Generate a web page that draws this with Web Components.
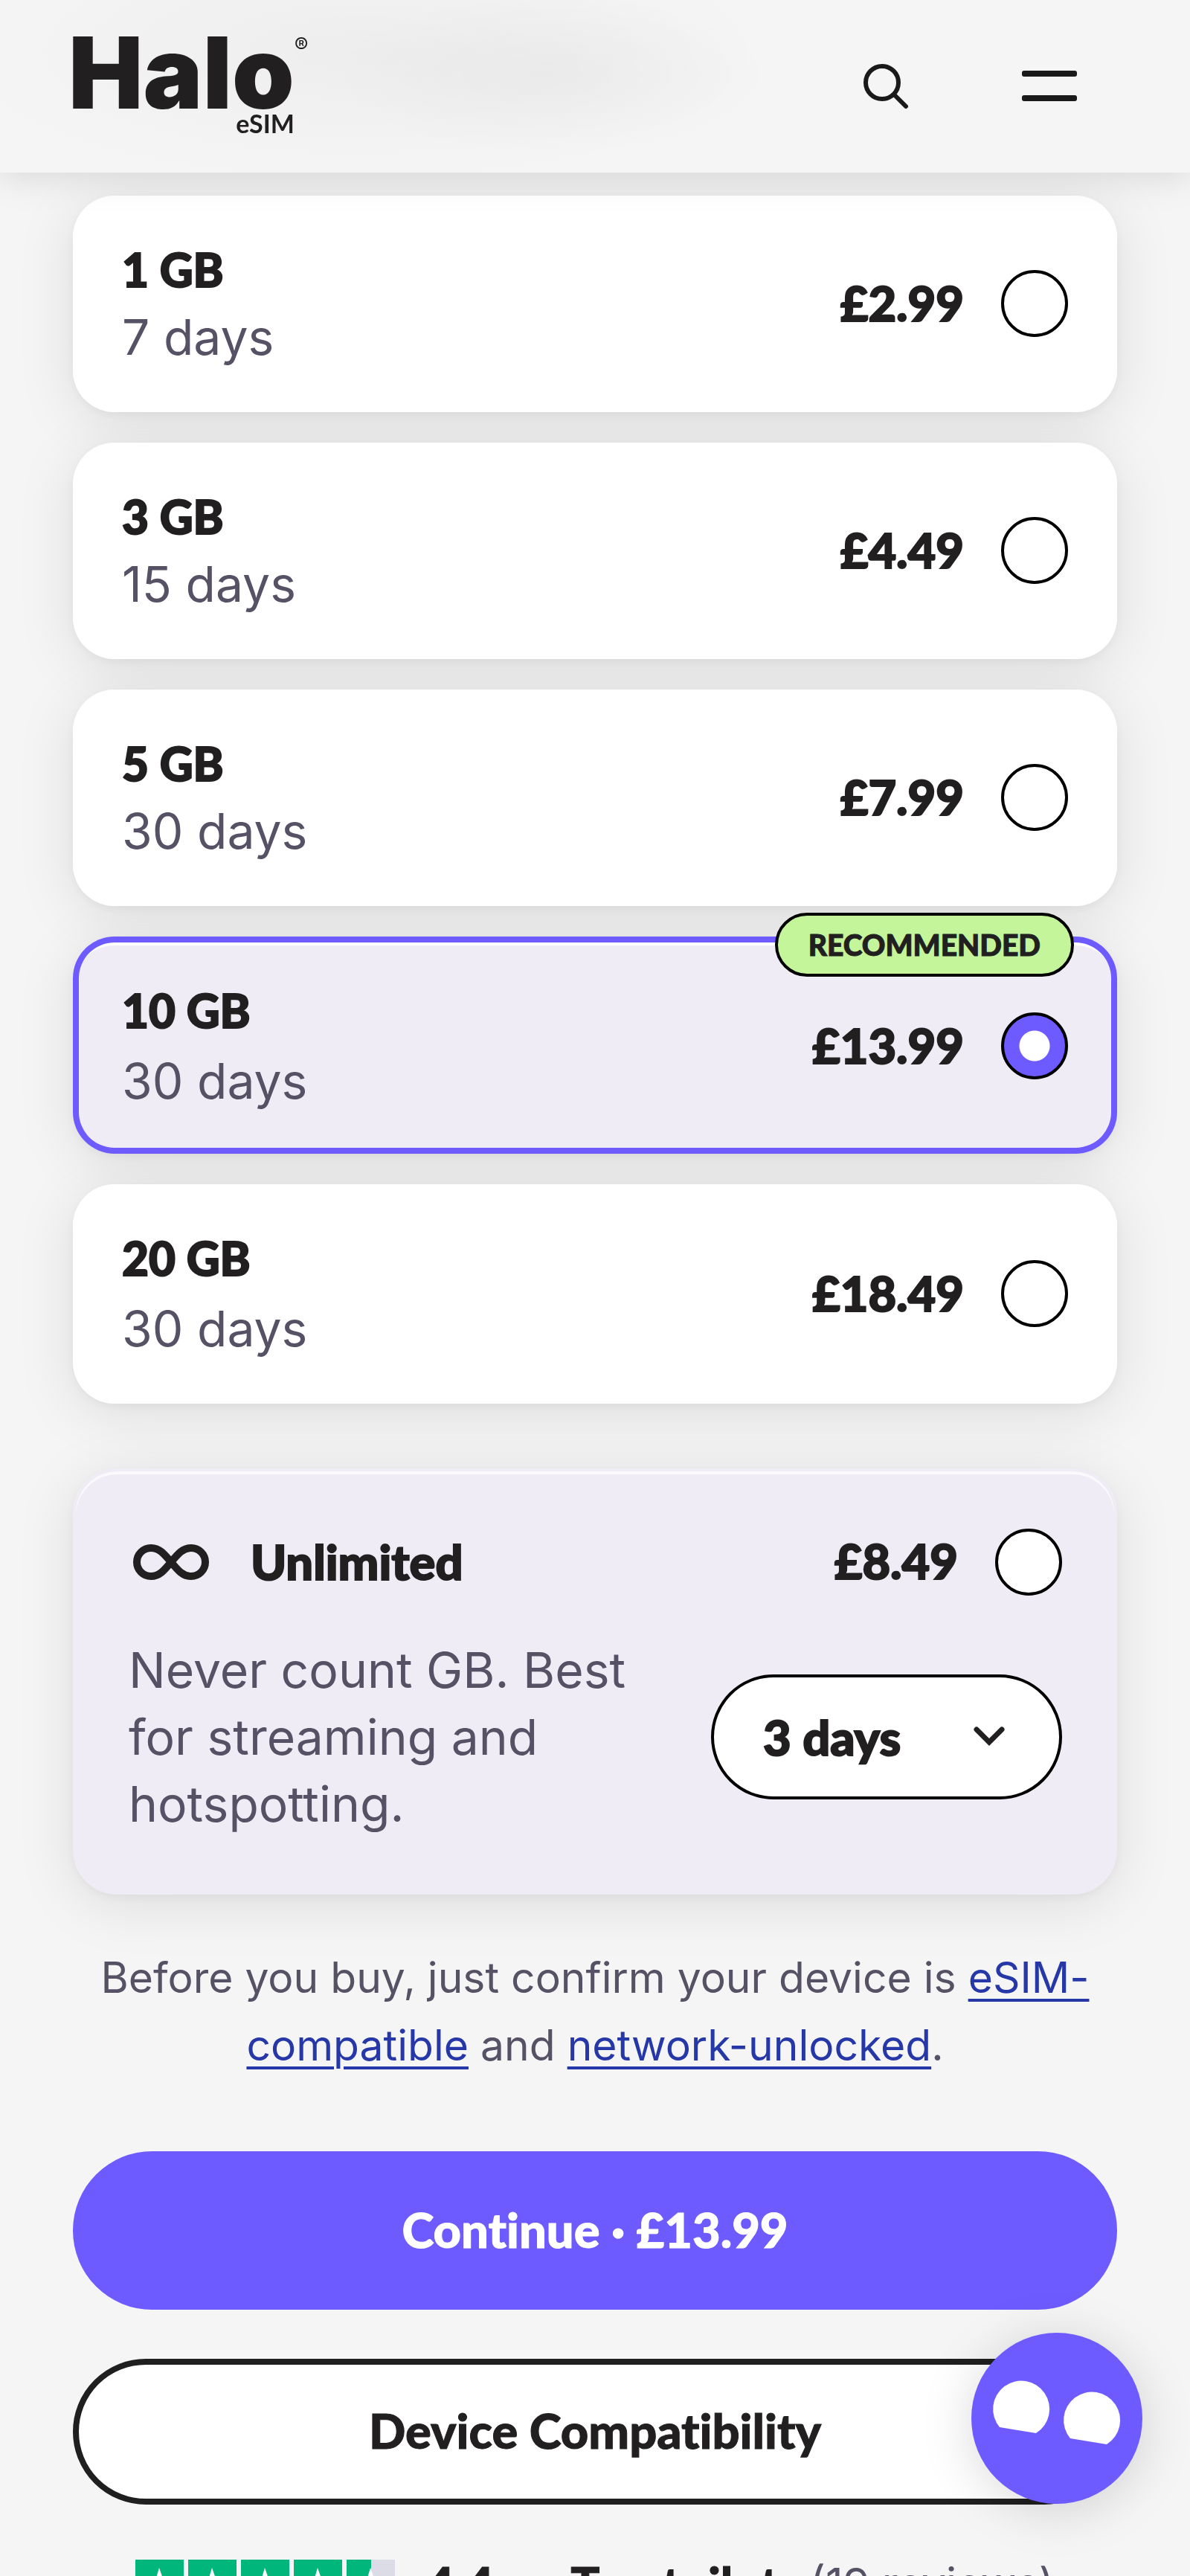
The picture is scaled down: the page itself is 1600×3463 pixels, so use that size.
<!DOCTYPE html>
<html lang="en">
<head>
<meta charset="utf-8">
<meta name="viewport" content="width=device-width, initial-scale=1">
<title>Halo eSIM</title>
<style>
:root{
    --ink:#211f20;
    --muted:#565164;
    --brand:#6e5bff;
    --tint:#efecf5;
    --page:#f5f5f5;
    --head-font:Lato,"Liberation Sans",sans-serif;
    --body-font:Inter,"Liberation Sans",sans-serif;
}
body{
    margin:0;
    height:100vh;
    overflow:hidden;
    background:var(--page);
    color:var(--ink);
    font-family:var(--body-font);
    font-variant-ligatures:none;
}
main{
    padding:31px 98px 40px;
}
</style>
</head>
<body>
<site-header></site-header>
<main>
    <plan-picker>
        <plan-option name="1 GB" validity="7 days" price="£2.99"></plan-option>
        <plan-option name="3 GB" validity="15 days" price="£4.49"></plan-option>
        <plan-option name="5 GB" validity="30 days" price="£7.99"></plan-option>
        <plan-option name="10 GB" validity="30 days" price="£13.99" large selected>Recommended</plan-option>
        <plan-option name="20 GB" validity="30 days" price="£18.49" large></plan-option>
        <unlimited-plan name="Unlimited" price="£8.49">Never count GB. Best for streaming and hotspotting.</unlimited-plan>
    </plan-picker>
    <device-note></device-note>
    <action-button id="continue">Continue · £13.99</action-button>
    <action-button outline>Device Compatibility</action-button>
    <trust-score score="4.4" reviews="19"></trust-score>
</main>
<chat-bubble></chat-bubble>

<script>
const radioStyle=`
input[type=radio]{
    appearance:none;
    flex:none;
    box-sizing:border-box;
    width:90px;
    height:90px;
    margin:0;
    border:4px solid #000;
    border-radius:50%;
    background:#fff;
}
input[type=radio]:checked{
    background:radial-gradient(circle,#fff 20px,var(--brand) 21px);
}
.price{
    padding-bottom:2px;
    font:900 65px/89px var(--head-font);
    -webkit-text-stroke:2px;
    white-space:nowrap;
}
`
const shadow='0 4px 12px rgba(0,0,0,.04),0 12px 80px rgba(0,0,0,.1)'

class SiteHeader extends HTMLElement{
    constructor(){
        super()
        this.attachShadow({mode:'open'})
    }
    connectedCallback(){
        this.shadowRoot.innerHTML=`
            <style>
            :host{
                display:block;
                position:sticky;
                top:0;
                z-index:2;
            }
            header{
                display:flex;
                align-items:center;
                justify-content:space-between;
                box-sizing:border-box;
                height:232px;
                padding:0 144px 0 92px;
                background:
                    radial-gradient(ellipse 300px 110px at 740px 100px,rgba(0,0,0,.03),rgba(0,0,0,0)),
                    radial-gradient(ellipse 560px 180px at 480px 70px,rgba(0,0,0,.03),rgba(0,0,0,0)),
                    var(--page);
                box-shadow:0 4px 48px rgba(0,0,0,.13);
            }
            .logo{
                display:grid;
                grid-template-columns:auto auto;
                color:var(--ink);
                text-decoration:none;
            }
            .word{
                font:900 134px/100px var(--body-font);
            }
            .reg{
                font:400 28px/28px var(--body-font);
            }
            .sub{
                justify-self:end;
                font:700 34px/38px var(--head-font);
            }
            nav{
                display:flex;
                gap:118px;
            }
            button{
                padding:0;
                border:0;
                background:none;
                width:98px;
                height:98px;
            }
            nav svg{
                display:block;
            }
            </style>
            <header>
                <a class="logo" href="#"><span class="word">Halo</span><span class="reg">®</span><span class="sub">eSIM</span></a>
                <nav>
                    <button aria-label="Search">
                        <svg width="98" height="98" viewBox="0 0 98 98" fill="none" stroke="#1b1a1b" stroke-width="6" stroke-linecap="round">
                            <circle cx="44" cy="44" r="22"/><path d="M60 60 76 76"/>
                        </svg>
                    </button>
                    <button aria-label="Menu">
                        <svg width="98" height="98" viewBox="0 0 98 98" fill="#1b1a1b">
                            <rect x="16" y="28" width="74" height="8" rx="3"/><rect x="16" y="61" width="74" height="8" rx="3"/>
                        </svg>
                    </button>
                </nav>
            </header>
        `
    }
}

class PlanOption extends HTMLElement{
    constructor(){
        super()
        this.attachShadow({mode:'open'})
    }
    connectedCallback(){
        const name=this.getAttribute('name')
        this.shadowRoot.innerHTML=`
            <style>
            ${radioStyle}
            :host{
                display:block;
                position:relative;
            }
            /* shadow sits under every card of the list */
            :host::before{
                content:"";
                position:absolute;
                inset:0;
                z-index:-1;
                border-radius:56px;
                box-shadow:${shadow};
            }
            label{
                display:flex;
                align-items:center;
                gap:50px;
                padding:54px 66px 55px;
                border-radius:56px;
                background:#fff;
            }
            .text{
                flex:1;
            }
            .name{
                font:900 62px/91px var(--head-font);
                -webkit-text-stroke:2px;
            }
            .validity{
                font:400 66px/91px var(--body-font);
                color:var(--muted);
            }
            :host([large]) .validity{
                margin-top:4px;
            }
            :host([selected]) label{
                padding-bottom:52px;
                background:var(--tint);
                box-shadow:inset 0 0 0 8px var(--brand),inset 0 12px 0 #fff;
            }
            .badge{
                position:absolute;
                top:-32px;
                right:58px;
                padding:0 41px;
                border:4px solid #000;
                border-radius:43px;
                background:#c4f59a;
                font:900 39px/78px var(--head-font);
                -webkit-text-stroke:1px;
                text-transform:uppercase;
            }
            .badge:not(.on){
                display:none;
            }
            </style>
            <label>
                <span class="text">
                    <div class="name">${name}</div>
                    <div class="validity">${this.getAttribute('validity')}</div>
                </span>
                <span class="price">${this.getAttribute('price')}</span>
                <input type="radio" ${this.hasAttribute('selected')?'checked':''}>
            </label>
            <div class="badge ${this.textContent.trim()?'on':''}"><slot></slot></div>
        `
    }
    get radio(){
        return this.shadowRoot.querySelector('input')
    }
}

class UnlimitedPlan extends HTMLElement{
    constructor(){
        super()
        this.attachShadow({mode:'open'})
    }
    connectedCallback(){
        this.shadowRoot.innerHTML=`
            <style>
            ${radioStyle}
            :host{
                display:block;
                box-sizing:border-box;
                margin-top:46px;
                padding:76px 70px 73px 71px;
                border:4px solid var(--tint);
                border-radius:60px;
                background:var(--tint);
                box-shadow:inset 0 4px 0 rgba(255,255,255,.7),${shadow};
            }
            label,.row{
                display:flex;
                align-items:center;
            }
            label{
                margin-bottom:55px;
            }
            .name{
                flex:1;
                margin-left:52px;
                font:900 65px/91px var(--head-font);
                -webkit-text-stroke:2px;
            }
            .price{
                margin-right:50px;
            }
            .row{
                gap:60px;
                justify-content:space-between;
            }
            p{
                flex:1;
                margin:0;
                max-width:700px;
                font:400 66px/90px var(--body-font);
                color:var(--muted);
            }
            .pick{
                display:grid;
                flex:none;
                width:472px;
            }
            .pick>*{
                grid-area:1/1;
            }
            select{
                appearance:none;
                box-sizing:border-box;
                height:168px;
                padding:0 66px;
                border:4px solid #000;
                border-radius:84px;
                background:#fff;
                color:var(--ink);
                font:900 65px/91px var(--head-font);
                -webkit-text-stroke:2px;
            }
            .pick svg{
                place-self:center end;
                margin-right:72px;
                pointer-events:none;
            }
            </style>
            <label>
                <svg width="112" height="64" viewBox="0 0 112 64" fill="none" stroke="#211f20" stroke-width="10">
                    <path d="M57 32C47 44 41 51 30 51a19 19 0 0 1 0-38c11 0 17 7 27 19s16 19 27 19a19 19 0 0 0 0-38c-11 0-17 7-27 19z"/>
                </svg>
                <span class="name">${this.getAttribute('name')}</span>
                <span class="price">${this.getAttribute('price')}</span>
                <input type="radio">
            </label>
            <div class="row">
                <p><slot></slot></p>
                <div class="pick">
                    <select aria-label="Number of days">
                        <option>3 days</option>
                        <option>5 days</option>
                        <option>7 days</option>
                    </select>
                    <svg width="52" height="52" viewBox="0 0 52 52" fill="none" stroke="#211f20" stroke-width="7" stroke-linecap="round">
                        <path d="M9 16 26 33 43 16"/>
                    </svg>
                </div>
            </div>
        `
    }
    get radio(){
        return this.shadowRoot.querySelector('input')
    }
}

class PlanPicker extends HTMLElement{
    constructor(){
        super()
        this.attachShadow({mode:'open'})
    }
    connectedCallback(){
        this.shadowRoot.innerHTML=`
            <style>
            :host{
                display:flex;
                flex-direction:column;
                gap:41px;
                isolation:isolate;
            }
            </style>
            <slot></slot>
        `
        // radios live in separate shadow roots, so the group is kept here
        this.addEventListener('input',e=>{
            const plan=e.target.closest('plan-option,unlimited-plan')
            if(!plan||!plan.radio.checked) return
            for(const item of this.children){
                item.radio.checked=item===plan
                item.toggleAttribute('selected',item===plan)
            }
            document.getElementById('continue').textContent='Continue · '+plan.getAttribute('price')
        })
    }
}

class DeviceNote extends HTMLElement{
    constructor(){
        super()
        this.attachShadow({mode:'open'})
    }
    connectedCallback(){
        this.shadowRoot.innerHTML=`
            <style>
            :host{
                display:block;
                margin:66px 0 97px;
                text-align:center;
                font:400 57px/91px var(--body-font);
                color:var(--muted);
            }
            a{
                color:#2638a8;
                text-decoration-thickness:4px;
                text-underline-offset:8px;
            }
            </style>
            Before you buy, just confirm your device is <a href="#">eSIM-compatible</a> and <a href="#">network-unlocked</a>.
        `
    }
}

class ActionButton extends HTMLElement{
    constructor(){
        super()
        this.attachShadow({mode:'open'})
    }
    connectedCallback(){
        this.shadowRoot.innerHTML=`
            <style>
            :host{
                display:block;
                margin-bottom:66px;
            }
            button{
                display:block;
                box-sizing:border-box;
                width:100%;
                padding:60px 40px 62px;
                border:0;
                border-radius:107px;
                background:var(--brand);
                color:#fff;
                font:900 65px/91px var(--head-font);
                font-variant-ligatures:none;
                -webkit-text-stroke:1px;
            }
            :host([outline]){
                margin-bottom:74px;
            }
            :host([outline]) button{
                padding:43px 40px 46px;
                border:8px solid #1f1f1f;
                background:#fff;
                color:var(--ink);
            }
            </style>
            <button><slot></slot></button>
        `
    }
}

class TrustScore extends HTMLElement{
    constructor(){
        super()
        this.attachShadow({mode:'open'})
    }
    connectedCallback(){
        const star=(fill)=>`
            <svg width="65" height="65" viewBox="0 0 65 65">
                <rect width="65" height="65" fill="#dcdce6"/>
                <rect width="${fill}" height="65" fill="#00b67a"/>
                <path fill="#fff" d="M32 11 38 28H54L41 37 46 53 32 43 19 53 24 37 11 28H27z"/>
            </svg>`
        this.shadowRoot.innerHTML=`
            <style>
            :host{
                display:flex;
                justify-content:center;
                gap:42px;
            }
            .stars{
                display:flex;
                gap:6px;
            }
            .count{
                font:400 58px/65px var(--body-font);
                color:var(--muted);
                white-space:nowrap;
            }
            b{
                font:900 65px/65px var(--head-font);
                -webkit-text-stroke:1px;
                white-space:nowrap;
            }
            </style>
            <div class="stars">${star(65).repeat(4)}${star(33)}</div>
            <b>${this.getAttribute('score')} on Trustpilot</b>
            <span class="count">(${this.getAttribute('reviews')} reviews)</span>
        `
    }
}

class ChatBubble extends HTMLElement{
    constructor(){
        super()
        this.attachShadow({mode:'open'})
    }
    connectedCallback(){
        this.shadowRoot.innerHTML=`
            <style>
            :host{
                position:fixed;
                right:64px;
                bottom:97px;
                z-index:3;
            }
            button{
                display:block;
                width:230px;
                height:230px;
                padding:0;
                border:0;
                border-radius:50%;
                background:var(--brand);
                box-shadow:0 8px 70px rgba(0,0,0,.15);
            }
            svg{
                display:block;
            }
            </style>
            <button aria-label="Open chat">
                <svg width="230" height="230" viewBox="0 0 230 230" fill="#fff">
                    <path d="M38 127A38 38 0 1 1 87 135z"/>
                    <path d="M133 142A38 38 0 1 1 182 150z"/>
                </svg>
            </button>
        `
    }
}

customElements.define('site-header',SiteHeader)
customElements.define('plan-option',PlanOption)
customElements.define('unlimited-plan',UnlimitedPlan)
customElements.define('plan-picker',PlanPicker)
customElements.define('device-note',DeviceNote)
customElements.define('action-button',ActionButton)
customElements.define('trust-score',TrustScore)
customElements.define('chat-bubble',ChatBubble)
</script>
</body>
</html>
